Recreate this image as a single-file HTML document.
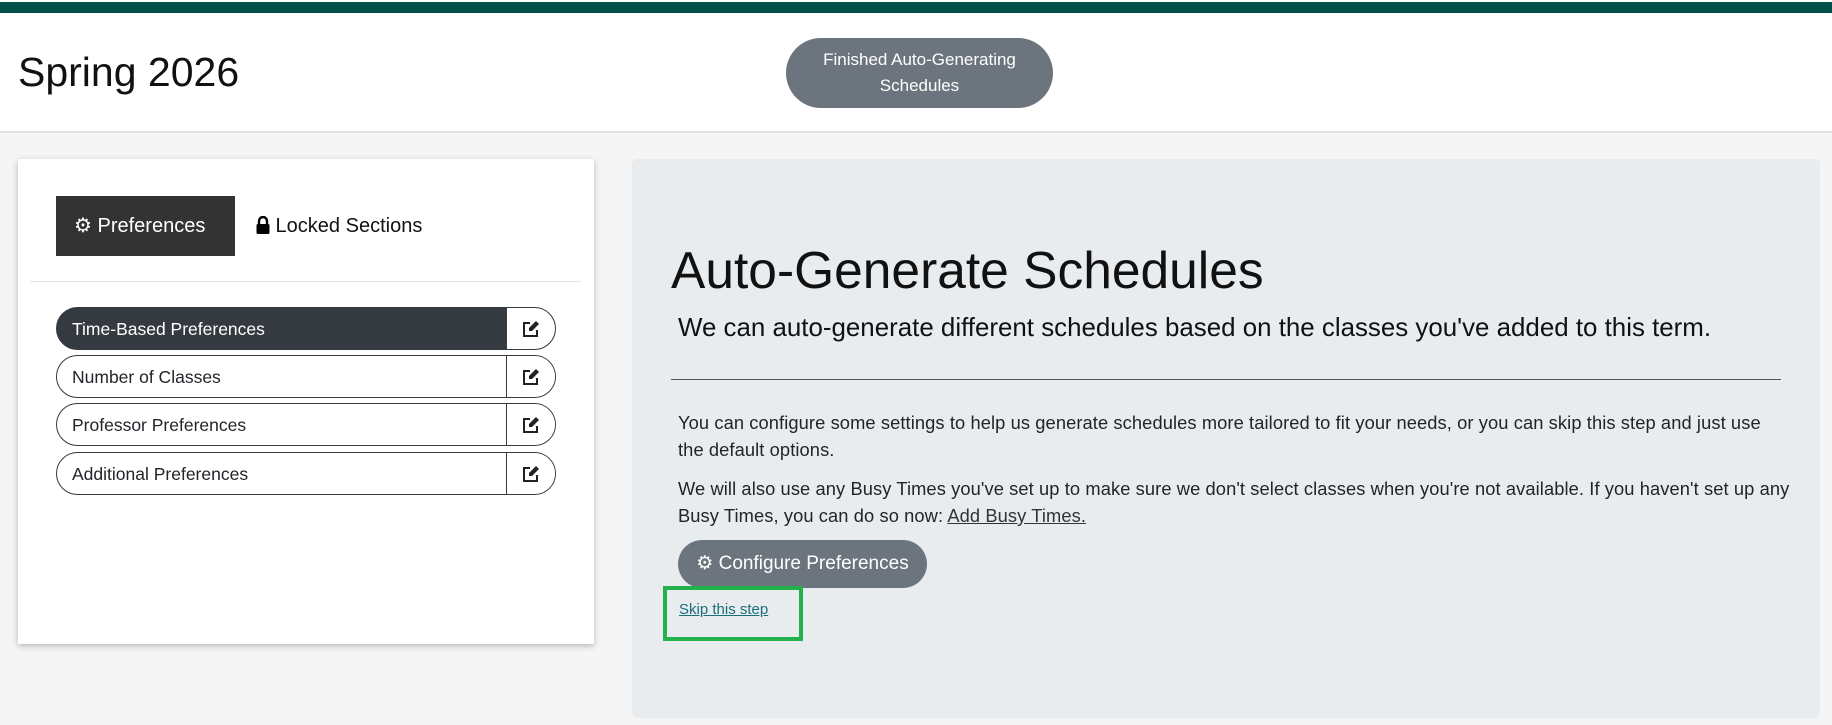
<!DOCTYPE html>
<html><head><style>
*{box-sizing:border-box;margin:0;padding:0}
body{width:1832px;height:725px;background:#f5f5f5;font-family:"Liberation Sans",sans-serif;position:relative;overflow:hidden;color:#212529}
.abs{position:absolute}
.top{left:0;top:0;width:1832px;height:13px;background:#fff}
.top div{position:absolute;left:0;top:2px;width:1832px;height:11px;background:#004f4a}
.hdr{left:0;top:13px;width:1832px;height:120px;background:#fff;border-bottom:2px solid #e3e3e3}
.card{left:18px;top:159px;width:576px;height:485px;background:#fff;box-shadow:0 2px 6px rgba(0,0,0,.25)}
.item{left:56px;width:500px;height:43px;border:1px solid #343a40;border-radius:22px;overflow:hidden;font-size:17.5px}
.item span{position:absolute;left:15px;top:11px}
.item .ic{position:absolute;left:449px;top:0;width:51px;height:43px;border-left:1px solid #343a40;background:#fff}
.ic svg{position:absolute;left:15px;top:12px}
.panel{left:632px;top:159px;width:1188px;height:559px;background:#e9ecef;border-radius:5px}
p.t{font-size:18.3px;line-height:27px;width:1125px;letter-spacing:0.1px}
</style></head><body>
<div class="abs top"><div></div></div>
<div class="abs hdr">
 <div class="abs" style="left:18px;top:36px;font-size:41px;color:#111">Spring 2026</div>
 <div class="abs" style="left:786px;top:25px;width:267px;height:70px;background:#6c757d;border-radius:35px;color:#fff;font-size:17px;text-align:center;line-height:26px;padding-top:9px">Finished Auto-Generating<br>Schedules</div>
</div>
<div class="abs card"></div>
<div class="abs" style="left:56px;top:196px;width:179px;height:60px;background:#333;color:#fff;font-size:20px;line-height:60px;padding-left:18px">⚙ Preferences</div>
<div class="abs" style="left:256px;top:196px;height:60px;font-size:20px;line-height:60px;color:#111"><svg width="14" height="18" viewBox="0 0 14 18" style="vertical-align:-2px"><path d="M3 8V5a4 4 0 0 1 8 0v3" stroke="#000" stroke-width="2.4" fill="none"/><rect x="0.5" y="8" width="13" height="10" rx="1.5"/></svg> Locked Sections</div>
<div class="abs" style="left:30px;top:281px;width:551px;height:1px;background:#e3e3e3"></div>
<div class="abs item" style="top:307px;background:#343a40;color:#fff"><span>Time-Based Preferences</span><div class="ic"><svg width="18" height="18" viewBox="0 0 18 18"><path d="M8 3H2v13h13v-6" stroke="#222" stroke-width="2" fill="none"/><path d="M14 1l3 3-7 7H7V8z" fill="#222"/></svg></div></div>
<div class="abs item" style="top:355px;background:#fff"><span>Number of Classes</span><div class="ic"><svg width="18" height="18" viewBox="0 0 18 18"><path d="M8 3H2v13h13v-6" stroke="#222" stroke-width="2" fill="none"/><path d="M14 1l3 3-7 7H7V8z" fill="#222"/></svg></div></div>
<div class="abs item" style="top:403px;background:#fff"><span>Professor Preferences</span><div class="ic"><svg width="18" height="18" viewBox="0 0 18 18"><path d="M8 3H2v13h13v-6" stroke="#222" stroke-width="2" fill="none"/><path d="M14 1l3 3-7 7H7V8z" fill="#222"/></svg></div></div>
<div class="abs item" style="top:452px;background:#fff"><span>Additional Preferences</span><div class="ic"><svg width="18" height="18" viewBox="0 0 18 18"><path d="M8 3H2v13h13v-6" stroke="#222" stroke-width="2" fill="none"/><path d="M14 1l3 3-7 7H7V8z" fill="#222"/></svg></div></div>
<div class="abs panel"></div>
<div class="abs" style="left:671px;top:240px;font-size:51.5px;color:#111">Auto-Generate Schedules</div>
<div class="abs" style="left:678px;top:314px;font-size:25.9px;color:#111">We can auto-generate different schedules based on the classes you've added to this term.</div>
<div class="abs" style="left:671px;top:379px;width:1110px;height:1px;background:#555"></div>
<p class="abs t" style="left:678px;top:409px;width:1110px">You can configure some settings to help us generate schedules more tailored to fit your needs, or you can skip this step and just use the default options.</p>
<p class="abs t" style="left:678px;top:475px">We will also use any Busy Times you've set up to make sure we don't select classes when you're not available. If you haven't set up any Busy Times, you can do so now: <u style="color:#333">Add Busy Times.</u></p>
<div class="abs" style="left:678px;top:540px;width:249px;height:48px;background:#6c757d;border-radius:24px;color:#fff;font-size:19px;line-height:48px;text-align:center">⚙ Configure Preferences</div>
<div class="abs" style="left:663px;top:586px;width:140px;height:55px;border:4px solid #22b14c"></div>
<div class="abs" style="left:679px;top:601px;font-size:15px;color:#1a6e7a;text-decoration:underline">Skip this step</div>
</body></html>
